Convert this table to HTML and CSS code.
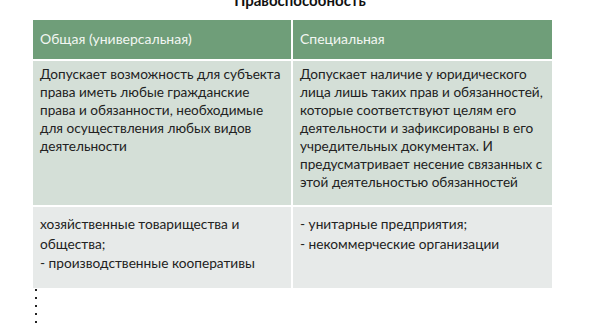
FILE: index.html
```html
<!DOCTYPE html>
<html lang="ru">
<head>
<meta charset="utf-8">
<link rel="stylesheet" href="styles.css">
</head>
<body>
<div class="title">Правоспособность</div>
<div class="table">
  <div class="cell head">Общая (универсальная)</div>
  <div class="cell head">Специальная</div>
  <div class="cell r1">Допускает возможность для субъекта<br>права иметь любые гражданские<br>права и обязанности, необходимые<br>для осуществления любых видов<br>деятельности</div>
  <div class="cell r1">Допускает наличие у юридического<br>лица лишь таких прав и обязанностей,<br>которые соответствуют целям его<br>деятельности и зафиксированы в его<br>учредительных документах. И<br>предусматривает несение связанных с<br>этой деятельностью обязанностей</div>
  <div class="cell r2">хозяйственные товарищества и<br>общества;<br>- производственные кооперативы</div>
  <div class="cell r2">- унитарные предприятия;<br>- некоммерческие организации</div>
</div>
<div class="dots">
  <span class="dot"></span><span class="dot"></span><span class="dot"></span><span class="dot"></span><span class="dot"></span>
</div>
</body>
</html>
```
FILE: styles.css
```css
html, body {
  margin: 0;
  padding: 0;
  background: #ffffff;
  width: 600px;
  height: 330px;
  overflow: hidden;
}
body {
  font-family: Lato, "Liberation Sans", sans-serif;
  color: #222222;
}
.title {
  height: 20px;
  margin-top: -7px;
  margin-bottom: 7px;
  text-align: center;
  font-weight: 700;
  font-size: 15px;
  line-height: 15px;
  color: #111111;
}
.table {
  margin-left: 33px;
  width: 519px;
  display: grid;
  grid-template-columns: 258px 259px;
  grid-template-rows: 39px 144px 81px;
  gap: 2px;
}
.cell {
  box-sizing: border-box;
  padding: 4px 2px 0 7px;
  font-size: 13.6px;
  line-height: 18px;
  white-space: nowrap;
  overflow: hidden;
}
.head {
  background: #6f9e79;
  color: #f2f6f2;
  font-size: 14px;
  padding-top: 10px;
}
.r1 {
  background: #d4dfd7;
}
.r2 {
  background: #e7eae9;
  font-size: 13.7px;
  padding-top: 7px;
  line-height: 19.5px;
}
.dots {
  margin-left: 35px;
  margin-top: 1px;
  display: flex;
  flex-direction: column;
  gap: 6px;
}
.dot {
  display: block;
  width: 2px;
  height: 2px;
  background: #222222;
}
```
